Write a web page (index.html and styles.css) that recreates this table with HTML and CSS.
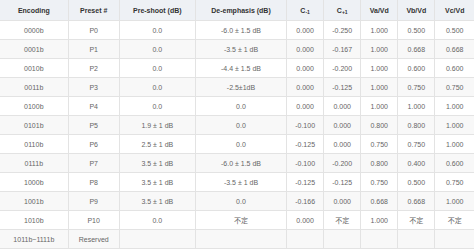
FILE: index.html
```html
<!DOCTYPE html>
<html lang="en">
<head>
  <meta charset="UTF-8">
  <title>Preset Table</title>
  <link rel="stylesheet" href="styles.css">
</head>
<body>
  <table class="presets">
    <colgroup>
      <col class="c-enc"><col class="c-pre"><col class="c-shoot"><col class="c-emph">
      <col class="c-n"><col class="c-n"><col class="c-n"><col class="c-n"><col class="c-last">
    </colgroup>
    <thead>
      <tr>
        <th>Encoding</th>
        <th>Preset #</th>
        <th>Pre-shoot (dB)</th>
        <th>De-emphasis (dB)</th>
        <th>C<sub>-1</sub></th>
        <th>C<sub>+1</sub></th>
        <th>Va/Vd</th>
        <th>Vb/Vd</th>
        <th>Vc/Vd</th>
      </tr>
    </thead>
    <tbody>
      <tr><td>0000b</td><td>P0</td><td>0.0</td><td>-6.0 ± 1.5 dB</td><td>0.000</td><td>-0.250</td><td>1.000</td><td>0.500</td><td>0.500</td></tr>
      <tr><td>0001b</td><td>P1</td><td>0.0</td><td>-3.5 ± 1 dB</td><td>0.000</td><td>-0.167</td><td>1.000</td><td>0.668</td><td>0.668</td></tr>
      <tr><td>0010b</td><td>P2</td><td>0.0</td><td>-4.4 ± 1.5 dB</td><td>0.000</td><td>-0.200</td><td>1.000</td><td>0.600</td><td>0.600</td></tr>
      <tr><td>0011b</td><td>P3</td><td>0.0</td><td>-2.5±1dB</td><td>0.000</td><td>-0.125</td><td>1.000</td><td>0.750</td><td>0.750</td></tr>
      <tr><td>0100b</td><td>P4</td><td>0.0</td><td>0.0</td><td>0.000</td><td>0.000</td><td>1.000</td><td>1.000</td><td>1.000</td></tr>
      <tr><td>0101b</td><td>P5</td><td>1.9 ± 1 dB</td><td>0.0</td><td>-0.100</td><td>0.000</td><td>0.800</td><td>0.800</td><td>1.000</td></tr>
      <tr><td>0110b</td><td>P6</td><td>2.5 ± 1 dB</td><td>0.0</td><td>-0.125</td><td>0.000</td><td>0.750</td><td>0.750</td><td>1.000</td></tr>
      <tr><td>0111b</td><td>P7</td><td>3.5 ± 1 dB</td><td>-6.0 ± 1.5 dB</td><td>-0.100</td><td>-0.200</td><td>0.800</td><td>0.400</td><td>0.600</td></tr>
      <tr><td>1000b</td><td>P8</td><td>3.5 ± 1 dB</td><td>-3.5 ± 1 dB</td><td>-0.125</td><td>-0.125</td><td>0.750</td><td>0.500</td><td>0.750</td></tr>
      <tr><td>1001b</td><td>P9</td><td>3.5 ± 1 dB</td><td>0.0</td><td>-0.166</td><td>0.000</td><td>0.668</td><td>0.668</td><td>1.000</td></tr>
      <tr><td>1010b</td><td>P10</td><td>0.0</td><td>不定</td><td>0.000</td><td>不定</td><td>1.000</td><td>不定</td><td>不定</td></tr>
      <tr><td>1011b~1111b</td><td>Reserved</td><td></td><td></td><td></td><td></td><td></td><td></td><td></td></tr>
    </tbody>
  </table>
</body>
</html>
```

FILE: styles.css
```css
/* Page */
body {
  margin: 0;
  background-color: #fff;
  font-family: "Liberation Sans", Arial, "Noto Sans CJK SC", sans-serif;
}

/* Table */
.presets {
  width: 474px;
  border-collapse: collapse;
  table-layout: fixed;
  font-size: 7px;
}

.c-enc { width: 68px; }
.c-pre { width: 51px; }
.c-shoot { width: 76px; }
.c-emph { width: 91px; }
.c-n { width: 37px; }
.c-last { width: 39px; }

.presets th,
.presets td {
  border: 1px solid #e3e3e3;
  padding: 0;
  text-align: center;
  white-space: nowrap;
  overflow: hidden;
}

.presets tr > :first-child {
  border-left: none;
}

.presets tr > :last-child {
  border-right: none;
}

.presets thead tr {
  border-top: none;
}

.presets th {
  height: 20px;
  background-color: #eef1f5;
  color: #333;
  font-weight: bold;
  border-top: none;
}

.presets th sub {
  font-size: 5px;
  vertical-align: -1px;
  line-height: 0;
}

.presets td {
  height: 18px;
  color: #666;
}

.presets tbody tr:nth-child(even) td {
  background-color: #f8f8f8;
}
```
